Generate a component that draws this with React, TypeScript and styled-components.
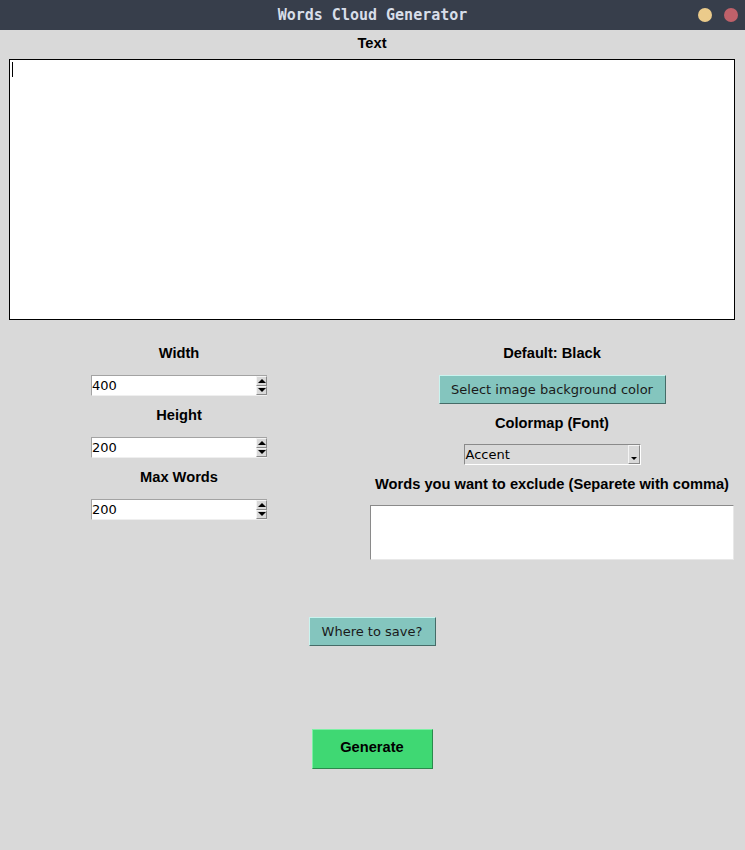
import React from "react";
import styled, { createGlobalStyle } from "styled-components";

const GlobalStyle = createGlobalStyle`
  html, body { margin: 0; padding: 0; background: #d9d9d9; }
  #root { width: 745px; height: 850px; overflow: hidden; }
  * { box-sizing: border-box; }
`;

const Window = styled.div`
  width: 745px;
  height: 850px;
  background: #d9d9d9;
  display: flex;
  flex-direction: column;
  overflow: hidden;
`;

const TitleBar = styled.div`
  height: 30px;
  flex: none;
  background: #373e4b;
  display: grid;
  grid-template-columns: 1fr auto 1fr;
  align-items: center;
`;

const Title = styled.div`
  grid-column: 2;
  font-family: "DejaVu Sans Mono", "Liberation Mono", monospace;
  font-weight: bold;
  font-size: 15px;
  color: #d8dee9;
`;

const Controls = styled.div`
  grid-column: 3;
  justify-self: end;
  display: flex;
  gap: 12px;
  padding-right: 7px;
`;

const Dot = styled.span<{ $color: string }>`
  width: 14px;
  height: 14px;
  border-radius: 50%;
  background: ${(p) => p.$color};
`;

const Body = styled.div`
  display: flex;
  flex-direction: column;
  padding: 0 10px 0 9px;
`;

const Label = styled.div<{ $h?: number; $top?: number }>`
  height: ${(p) => p.$h ?? 41}px;
  padding-top: ${(p) => p.$top ?? 11}px;
  line-height: 17px;
  font-family: "Liberation Sans", Arial, sans-serif;
  font-weight: bold;
  font-size: 14.67px;
  color: #000;
  text-align: center;
  white-space: nowrap;
`;

const TextBox = styled.div`
  width: 726px;
  height: 261px;
  border: 1px solid #000;
  background: #fff;
  padding: 2px;
`;

const Caret = styled.span`
  display: block;
  width: 1px;
  height: 15px;
  background: #000;
`;

const Columns = styled.div`
  margin-top: 14px;
  display: flex;
  gap: 21px;
  align-items: flex-start;
`;

const Column = styled.div<{ $w: number }>`
  width: ${(p) => p.$w}px;
  display: flex;
  flex-direction: column;
  align-items: center;
`;

const SpinBox = styled.div`
  width: 176px;
  height: 21px;
  background: #fff;
  border-top: 1px solid #a3a3a3;
  border-left: 1px solid #a3a3a3;
  border-bottom: 1px solid #efefef;
  display: flex;
  align-items: center;
  justify-content: space-between;
`;

const FieldText = styled.span`
  font-family: "DejaVu Sans", sans-serif;
  font-size: 13px;
  color: #000;
  line-height: 17px;
`;

const SpinButtons = styled.div`
  display: flex;
  flex-direction: column;
  height: 19px;
`;

const SpinButton = styled.div`
  width: 11px;
  height: 9.5px;
  background: #d9d9d9;
  border-style: solid;
  border-width: 1px;
  border-color: #f4f4f4 #8a8a8a #8a8a8a #f4f4f4;
  display: flex;
  align-items: center;
  justify-content: center;
`;

const Triangle = styled.span<{ $dir: "up" | "down"; $size?: number }>`
  width: 0;
  height: 0;
  border-left: ${(p) => p.$size ?? 4}px solid transparent;
  border-right: ${(p) => p.$size ?? 4}px solid transparent;
  ${(p) =>
    p.$dir === "up"
      ? `border-bottom: ${p.$size ?? 4}px solid #000;`
      : `border-top: ${p.$size ?? 4}px solid #000;`}
`;

const TealButton = styled.button<{ $w: number }>`
  width: ${(p) => p.$w}px;
  height: 29px;
  margin: 0;
  padding: 0;
  background: #84c5be;
  border-style: solid;
  border-width: 1px;
  border-color: #c9f4ef #466c68 #466c68 #c9f4ef;
  font-family: "DejaVu Sans", sans-serif;
  font-size: 13px;
  color: #1a1a1a;
  cursor: pointer;
`;

const Combo = styled.div`
  width: 177px;
  height: 21px;
  background: #d9d9d9;
  border-style: solid;
  border-width: 1px;
  border-color: #8a8a8a #ffffff #ffffff #8a8a8a;
  display: flex;
  align-items: stretch;
  justify-content: space-between;
  padding-left: 1px;
`;

const ComboText = styled(FieldText)`
  align-self: center;
`;

const ComboArrow = styled.div`
  width: 12px;
  border-style: solid;
  border-width: 1px;
  border-color: #f4f4f4 #8a8a8a #8a8a8a #f4f4f4;
  background: #d9d9d9;
  display: flex;
  align-items: flex-end;
  justify-content: center;
  padding-bottom: 3px;
`;

const ExcludeBox = styled.div`
  align-self: stretch;
  height: 55px;
  background: #fff;
  border-style: solid;
  border-width: 1px;
  border-color: #8a8a8a #e8e8e8 #e8e8e8 #8a8a8a;
`;

const SaveButton = styled(TealButton)`
  align-self: center;
  margin-top: 57px;
`;

const GenerateButton = styled.button`
  align-self: center;
  margin-top: 83px;
  width: 121px;
  height: 40px;
  padding: 0 0 4px;
  background: #3fd873;
  border-style: solid;
  border-width: 1px;
  border-color: #7cf0a4 #2a8a4c #2a8a4c #7cf0a4;
  font-family: "Liberation Sans", Arial, sans-serif;
  font-weight: bold;
  font-size: 14.67px;
  color: #000;
  cursor: pointer;
`;

const Spin: React.FC<{ value: string }> = ({ value }) => (
  <SpinBox>
    <FieldText>{value}</FieldText>
    <SpinButtons>
      <SpinButton>
        <Triangle $dir="up" />
      </SpinButton>
      <SpinButton>
        <Triangle $dir="down" />
      </SpinButton>
    </SpinButtons>
  </SpinBox>
);

export default function App() {
  return (
    <>
      <GlobalStyle />
      <Window>
        <TitleBar>
          <Title>Words Cloud Generator</Title>
          <Controls>
            <Dot $color="#ebcb8b" />
            <Dot $color="#bf616a" />
          </Controls>
        </TitleBar>
        <Body>
          <Label $h={29} $top={5}>Text</Label>
          <TextBox>
            <Caret />
          </TextBox>
          <Columns>
            <Column $w={340}>
              <Label>Width</Label>
              <Spin value="400" />
              <Label>Height</Label>
              <Spin value="200" />
              <Label>Max Words</Label>
              <Spin value="200" />
            </Column>
            <Column $w={364}>
              <Label>Default: Black</Label>
              <TealButton $w={227}>Select image background color</TealButton>
              <Label $h={40}>Colormap (Font)</Label>
              <Combo>
                <ComboText>Accent</ComboText>
                <ComboArrow>
                  <Triangle $dir="down" $size={3} />
                </ComboArrow>
              </Combo>
              <Label $h={40}>Words you want to exclude (Separete with comma)</Label>
              <ExcludeBox />
            </Column>
          </Columns>
          <SaveButton $w={127}>Where to save?</SaveButton>
          <GenerateButton>Generate</GenerateButton>
        </Body>
      </Window>
    </>
  );
}
